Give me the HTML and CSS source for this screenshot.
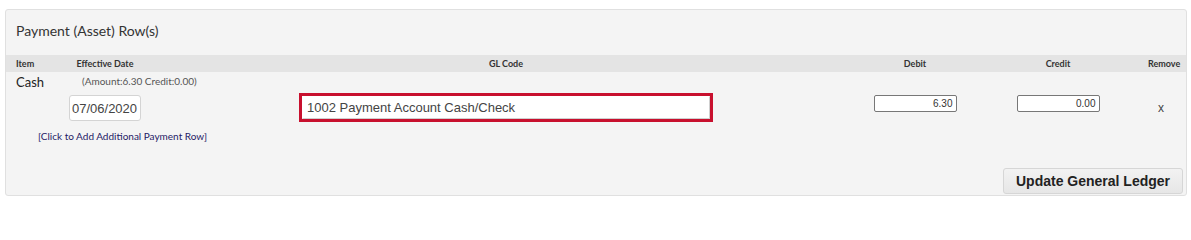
FILE: index.html
```html
<!DOCTYPE html>
<html>
<head>
<meta charset="utf-8">
<link rel="stylesheet" href="styles.css">
</head>
<body>
<div class="panel">
  <div class="title">Payment (Asset) Row(s)</div>
  <div class="grid head">
    <div class="h-item">Item</div>
    <div class="h-center">Effective Date</div>
    <div class="h-center">GL Code</div>
    <div class="h-center">Debit</div>
    <div class="h-center">Credit</div>
    <div class="h-remove">Remove</div>
  </div>
  <div class="grid body">
    <div class="cash">Cash</div>
    <div class="date-cell">
      <div class="amount">(Amount:6.30 Credit:0.00)</div>
      <input class="date-input" type="text" value="07/06/2020">
    </div>
    <div class="gl-wrap"><input class="gl-input" type="text" value="1002 Payment Account Cash/Check"></div>
    <input class="money" type="text" value="6.30">
    <input class="money" type="text" value="0.00">
    <div class="remove">x</div>
  </div>
  <div class="add-link">[Click to Add Additional Payment Row]</div>
  <div class="footer">
    <button class="update-btn" type="button">Update General Ledger</button>
  </div>
</div>
</body>
</html>
```

FILE: styles.css
```css
html, body {
  margin: 0;
  padding: 0;
  background: #ffffff;
}
body {
  font-family: "Lato", "Liberation Sans", sans-serif;
  color: #333;
}
.panel {
  margin: 9px 4px 0 5px;
  height: 187px;
  box-sizing: border-box;
  background: #f4f4f4;
  border: 1px solid #e0e0e0;
  border-radius: 3px;
  display: flex;
  flex-direction: column;
}
.title {
  padding: 12px 10px 16px;
  font-size: 14px;
  line-height: 17px;
  color: #333;
}
.grid {
  display: grid;
  grid-template-columns: 54px 90px 712px 106px 180px 1fr;
}
.head {
  background: #e4e4e4;
  height: 17px;
  line-height: 17px;
  font-size: 9px;
  font-weight: 700;
  color: #333;
}
.h-item {
  padding-left: 10px;
}
.h-center {
  text-align: center;
}
.h-remove {
  text-align: center;
  padding-right: 12px;
}
.body {
  align-items: start;
}
.cash {
  padding-left: 10px;
  margin-top: 2px;
  font-size: 13px;
  line-height: 16px;
  color: #222;
}
.date-cell {
  display: flex;
  flex-direction: column;
  align-items: flex-start;
}
.amount {
  margin: 3px 0 0 22px;
  font-size: 10px;
  line-height: 12px;
  color: #555;
  white-space: nowrap;
}
.date-input {
  margin: 8px 0 0 9px;
  width: 72px;
  height: 26px;
  box-sizing: border-box;
  border: 1px solid #d4d4d4;
  border-radius: 3px;
  background: #fff;
  padding: 0 2px;
  font-family: "Liberation Sans", Arial, sans-serif;
  font-size: 13px;
  color: #444;
}
.gl-wrap {
  justify-self: center;
  margin-top: 21px;
  width: 414px;
  height: 29px;
  box-sizing: border-box;
  border: 3px solid #c8102e;
  display: flex;
}
.gl-input {
  flex: 1;
  min-width: 0;
  box-sizing: border-box;
  height: 100%;
  border: 1px solid #cfcfcf;
  border-left-color: #fff;
  border-top-color: #fff;
  background: #fff;
  padding: 0 4px;
  font-family: "Liberation Sans", Arial, sans-serif;
  font-size: 13px;
  color: #444;
}
.money {
  justify-self: center;
  margin-top: 23px;
  width: 83px;
  height: 17px;
  box-sizing: border-box;
  border: 1px solid #777;
  border-radius: 2px;
  background: #fff;
  padding: 0 3px;
  text-align: right;
  font-family: "Liberation Sans", Arial, sans-serif;
  font-size: 10px;
  color: #333;
}
.remove {
  margin-top: 29px;
  padding-right: 12px;
  text-align: center;
  font-family: "Liberation Sans", Arial, sans-serif;
  font-size: 12px;
  line-height: 14px;
  color: #444;
}
.add-link {
  margin-top: 8px;
  padding-left: 32px;
  font-size: 10px;
  line-height: 12px;
  color: #1f1a66;
  white-space: nowrap;
}
.footer {
  margin-top: auto;
  display: flex;
  justify-content: flex-end;
  padding: 0 3px 1px 0;
}
.update-btn {
  width: 180px;
  height: 26px;
  box-sizing: border-box;
  border: 1px solid #d6d6d6;
  border-radius: 3px;
  background: linear-gradient(#f2f2f2, #e6e6e6);
  font-family: "Liberation Sans", Arial, sans-serif;
  font-size: 14px;
  font-weight: 700;
  color: #222;
  padding: 0;
}
```
